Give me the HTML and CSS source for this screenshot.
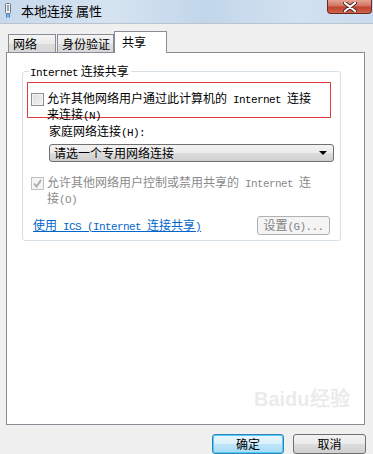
FILE: index.html
```html
<!DOCTYPE html>
<html lang="zh-CN">
<head>
    <meta charset="UTF-8">
    <title>本地连接 属性</title>
    <link rel="stylesheet" href="styles.css">
</head>
<body>
    <div class="window">
        <div class="titlebar">
            <svg class="app-icon" width="8" height="15" viewBox="0 0 8 15">
                <rect x="1.5" y="0.5" width="5" height="10" rx="1" fill="#eef2f6" stroke="#6f7b88"/>
                <rect x="3" y="2" width="2" height="6" fill="#9aa6b2"/>
                <rect x="2" y="11" width="1.5" height="3.5" fill="#3a86c8"/>
                <rect x="4.5" y="11" width="1.5" height="3.5" fill="#3a86c8"/>
            </svg>
            <span class="title">本地连接 属性</span>
            <div class="close-btn">
                <svg width="14" height="10" viewBox="0 0 14 10">
                    <path d="M2 1 L12 9 M12 1 L2 9" stroke="#4a2a26" stroke-width="4" stroke-linecap="round"/>
                    <path d="M2 1 L12 9 M12 1 L2 9" stroke="#ffffff" stroke-width="2.2" stroke-linecap="round"/>
                </svg>
            </div>
        </div>

        <div class="tabs">
            <div class="tab">网络</div>
            <div class="tab">身份验证</div>
            <div class="tab active">共享</div>
        </div>

        <div class="panel">
            <div class="group">
                <div class="legend"><span class="en">Internet</span> 连接共享</div>

                <div class="option highlight">
                    <span class="checkbox"></span>
                    <span class="label">允许其他网络用户通过此计算机的<span class="en"> Internet </span>连接<br>来连接<span class="en">(N)</span></span>
                </div>

                <div class="home-label">家庭网络连接<span class="en">(H):</span></div>
                <div class="select">
                    <span>请选一个专用网络连接</span>
                    <span class="arrow"></span>
                </div>

                <div class="option disabled">
                    <span class="checkbox checked">
                        <svg width="11" height="11" viewBox="0 0 11 11">
                            <path d="M2 5.5 L4.5 8.5 L9 2" fill="none" stroke="#a8a8a8" stroke-width="1.8"/>
                        </svg>
                    </span>
                    <span class="label">允许其他网络用户控制或禁用共享的<span class="en"> Internet </span>连<br>接<span class="en">(O)</span></span>
                </div>

                <div class="link-row">
                    <a href="#" class="ics-link">使用<span class="en"> ICS (Internet </span>连接共享<span class="en">)</span></a>
                    <button class="btn settings" disabled>设置<span class="en">(G)...</span></button>
                </div>
            </div>
        </div>

        <div class="footer">
            <button class="btn primary">确定</button>
            <button class="btn">取消</button>
        </div>

        <div class="watermark">Baidu经验</div>
    </div>
</body>
</html>
```

FILE: styles.css
```css
body {
    margin: 0;
    background-color: #f0f0f0;
    font-family: "Noto Sans CJK SC", sans-serif;
    font-size: 12px;
    color: #000;
}
.window {
    position: relative;
    width: 373px;
    height: 454px;
    overflow: hidden;
    background-color: #f0f0f0;
}
.en {
    font-family: "Liberation Mono", monospace;
    font-size: 11px;
    letter-spacing: -0.6px;
}
.titlebar {
    display: flex;
    align-items: flex-start;
    height: 23px;
    padding-left: 4px;
    background: linear-gradient(90deg, #c7d9ec 0%, #d5e3f1 30%, #c2d6ea 55%, #d2e1f0 80%, #c9dbee 100%);
    border-bottom: 1px solid #b9c4cf;
}
.app-icon {
    margin-top: 3px;
}
.title {
    margin-left: 9px;
    margin-top: 3px;
    font-size: 13px;
    line-height: 15px;
    color: #000;
}
.close-btn {
    margin-left: auto;
    margin-right: 1px;
    width: 45px;
    height: 14px;
    box-sizing: border-box;
    border: 1px solid #6e2a22;
    border-top: none;
    border-radius: 0 0 4px 4px;
    background: linear-gradient(180deg, #e8a393 0%, #d27462 45%, #c0432e 55%, #d0644c 100%);
    display: flex;
    align-items: center;
    justify-content: center;
}
.tabs {
    display: flex;
    align-items: flex-end;
    height: 21px;
    padding: 7px 0 0 8px;
}
.tab {
    box-sizing: border-box;
    height: 18px;
    border: 1px solid #898c95;
    border-bottom: none;
    background: linear-gradient(180deg, #f4f4f4 0%, #ebebeb 50%, #dcdcdc 51%, #d8d8d8 100%);
    padding: 2px 0 0 4px;
    line-height: 14px;
}
.tab:nth-child(1) {
    width: 48px;
    margin-right: 1px;
}
.tab:nth-child(2) {
    width: 57px;
}
.tab.active {
    width: 53px;
    height: 22px;
    margin-bottom: -1px;
    background-color: #fff;
    background-image: none;
    padding: 3px 0 0 7px;
    position: relative;
    z-index: 1;
}
.panel {
    box-sizing: border-box;
    margin-left: 6px;
    width: 359px;
    height: 373px;
    border: 1px solid #898c95;
    background-color: #fff;
    padding: 18px 0 0 15px;
}
.group {
    position: relative;
    box-sizing: border-box;
    width: 319px;
    height: 170px;
    border: 1px solid #d5dfe5;
    border-radius: 3px;
}
.legend {
    position: absolute;
    top: -8px;
    left: 6px;
    padding: 0 2px 0 1px;
    background-color: #fff;
    line-height: 14px;
}
.option {
    display: flex;
    align-items: flex-start;
    gap: 3px;
    line-height: 13px;
}
.option.highlight {
    box-sizing: border-box;
    width: 304px;
    height: 36px;
    margin: 10px 0 0 4px;
    padding: 8px 0 0 3px;
    border: 1px solid #e23b3b;
}
.option.disabled {
    margin: 13px 0 0 8px;
    color: #8a8a8a;
}
.checkbox {
    box-sizing: border-box;
    flex: none;
    width: 13px;
    height: 13px;
    margin-top: 2px;
    border: 1px solid #8e8f8f;
    background: linear-gradient(135deg, #dcdcdc 0%, #f4f4f4 100%);
    box-shadow: inset 0 0 0 1px #f4f4f4;
}
.checkbox.checked {
    border-color: #c0c0c0;
    background: #f4f4f4;
    box-shadow: none;
    display: flex;
    align-items: center;
    justify-content: center;
}
.home-label {
    margin: 6px 0 0 26px;
    line-height: 13px;
}
.select {
    box-sizing: border-box;
    display: flex;
    align-items: center;
    justify-content: space-between;
    width: 285px;
    height: 18px;
    margin: 4px 0 0 26px;
    padding: 0 6px 0 4px;
    border: 1px solid #707070;
    border-radius: 3px;
    background: linear-gradient(180deg, #f3f3f3 0%, #ebebeb 50%, #dddddd 51%, #cfcfcf 100%);
    line-height: 14px;
}
.arrow {
    width: 0;
    height: 0;
    border-left: 4px solid transparent;
    border-right: 4px solid transparent;
    border-top: 4px solid #000;
}
.link-row {
    display: flex;
    align-items: center;
    justify-content: space-between;
    margin: 9px 10px 0 10px;
}
.ics-link {
    color: #0066cc;
    text-decoration: underline;
    line-height: 13px;
}
.btn {
    box-sizing: border-box;
    height: 20px;
    width: 73px;
    padding: 0;
    border: 1px solid #707070;
    border-radius: 3px;
    background: linear-gradient(180deg, #f2f2f2 0%, #ebebeb 50%, #dddddd 51%, #cfcfcf 100%);
    font-family: "Noto Sans CJK SC", sans-serif;
    font-size: 12px;
    color: #000;
    line-height: 16px;
}
.btn.settings {
    height: 19px;
    border-color: #adb2b5;
    background: #f4f4f4;
    color: #838383;
}
.btn.primary {
    width: 72px;
    border-color: #3c7fb1;
    background: linear-gradient(180deg, #eaf6fd 0%, #d9f0fc 50%, #bee6fd 51%, #a7d9f5 100%);
    box-shadow: inset 0 0 0 1px #48d0fb;
}
.footer {
    display: flex;
    justify-content: flex-end;
    gap: 9px;
    padding: 9px 7px 0 0;
}
.watermark {
    position: absolute;
    left: 254px;
    top: 388px;
    white-space: nowrap;
    font-family: "Liberation Sans", sans-serif;
    font-size: 20px;
    font-weight: bold;
    color: rgba(215, 215, 215, 0.5);
    line-height: 22px;
    pointer-events: none;
}
```
